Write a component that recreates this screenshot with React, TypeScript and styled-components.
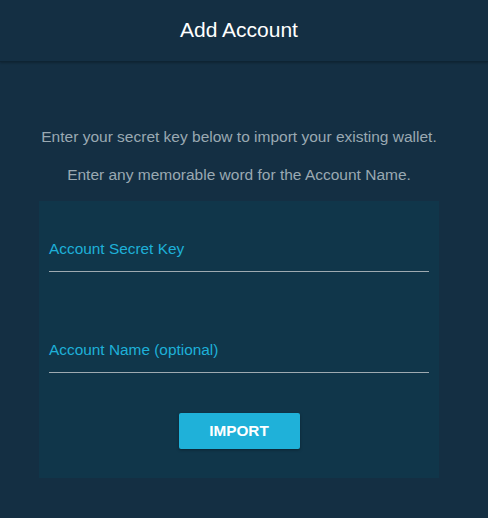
import styled, { createGlobalStyle } from 'styled-components'

const GlobalStyle = createGlobalStyle`
  html, body {
    margin: 0;
    padding: 0;
    background: #142f43;
  }
  body {
    font-family: "Liberation Sans", Arial, Helvetica, sans-serif;
    -webkit-font-smoothing: antialiased;
  }
`

function App () {
  return (
    <StyledPage>
      <GlobalStyle />
      <Header>
        <HeaderTitle>Add Account</HeaderTitle>
      </Header>
      <Body>
        <Hint>Enter your secret key below to import your existing wallet.</Hint>
        <Hint>Enter any memorable word for the Account Name.</Hint>
        <Card>
          <Field first>
            <FieldLabel>Account Secret Key</FieldLabel>
          </Field>
          <Field>
            <FieldLabel>Account Name (optional)</FieldLabel>
          </Field>
          <ButtonRow>
            <ImportButton type="button">IMPORT</ImportButton>
          </ButtonRow>
        </Card>
      </Body>
    </StyledPage>
  )
}

// content is laid out in 478px, leaving room on the right like a scrollbar gutter
const StyledPage = styled.div`
  width: 488px;
  height: 518px;
  padding-right: 10px;
  box-sizing: border-box;
  background: #142f43;
  display: flex;
  flex-direction: column;
  overflow: hidden;
`

const Header = styled.div`
  height: 61px;
  margin-right: -10px;
  padding-right: 10px;
  display: flex;
  align-items: center;
  justify-content: center;
  border-bottom: 1px solid #0e2433;
  box-shadow: 0 1px 2px rgba(0, 0, 0, 0.25);
`

const HeaderTitle = styled.div`
  color: #ffffff;
  font-size: 21px;
  line-height: 24px;
  margin-top: -1px;
`

const Body = styled.div`
  display: flex;
  flex-direction: column;
  align-items: center;
  padding-top: 65px;
`

const Hint = styled.div`
  color: #9aa9b2;
  font-size: 15.5px;
  line-height: 20px;
  text-align: center;
  white-space: nowrap;
  & + & {
    margin-top: 18px;
  }
`

const Card = styled.div`
  width: 400px;
  margin-top: 16px;
  background: #10364a;
  padding: 0 10px 29px;
  box-sizing: border-box;
  display: flex;
  flex-direction: column;
`

const Field = styled.div<{ first?: boolean }>`
  padding-top: ${props => (props.first ? '40px' : '70px')};
  padding-bottom: 14px;
  border-bottom: 1px solid #9eaab1;
`

const FieldLabel = styled.div`
  color: #1eb0d8;
  font-size: 15.4px;
  line-height: 16px;
`

const ButtonRow = styled.div`
  display: flex;
  justify-content: center;
  margin-top: 40px;
`

const ImportButton = styled.button`
  width: 121px;
  height: 36px;
  border: none;
  border-radius: 2px;
  background: #1fb1d9;
  color: #ffffff;
  font-family: "Liberation Sans", Arial, Helvetica, sans-serif;
  font-size: 15.3px;
  font-weight: 700;
  box-shadow: 0 1px 3px rgba(0, 0, 0, 0.35);
  cursor: pointer;
`

export default App
